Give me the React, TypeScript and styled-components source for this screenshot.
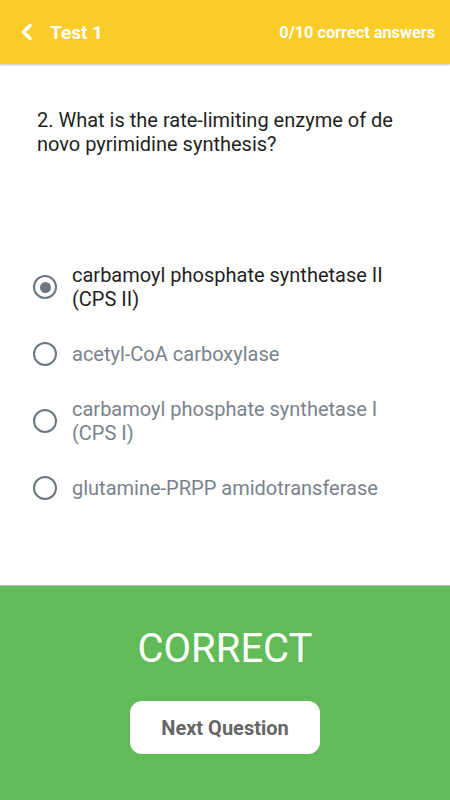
import * as React from 'react'
import styled, { createGlobalStyle } from 'styled-components'

const GlobalStyle = createGlobalStyle`
  html, body {
    margin: 0;
    padding: 0;
    height: 100%;
  }
  body {
    font-family: Roboto, 'Noto Sans', 'Liberation Sans', sans-serif;
    background: #ffffff;
  }
  #root {
    height: 100%;
  }
`

const Screen = styled.div`
  width: 450px;
  height: 800px;
  display: flex;
  flex-direction: column;
  overflow: hidden;
`

const Header = styled.header`
  height: 64px;
  flex: 0 0 64px;
  background: #f9cc27;
  display: flex;
  align-items: center;
  padding: 0 15px 0 18px;
  color: #ffffff;
  box-shadow: 0 1px 2px rgba(0, 0, 0, 0.25);
  position: relative;
  z-index: 1;
`

const BackButton = styled.button`
  border: 0;
  background: none;
  padding: 0;
  width: 16px;
  height: 24px;
  display: flex;
  align-items: center;
  justify-content: center;
  color: #ffffff;
  cursor: pointer;
`

const Title = styled.div`
  font-size: 19px;
  font-weight: 700;
  margin-left: 16px;
  flex: 1;
`

const Score = styled.div`
  font-size: 16.3px;
  font-weight: 700;
`

const Body = styled.main`
  flex: 1;
  display: flex;
  flex-direction: column;
  padding: 44px 30px 0 37px;
`

const Question = styled.h1`
  margin: 0;
  font-size: 20px;
  font-weight: 400;
  line-height: 24px;
  color: #1f1f1f;
`

const Options = styled.div`
  margin-top: 107px;
  margin-left: -4px;
  display: flex;
  flex-direction: column;
  gap: 31px;
`

const Option = styled.label`
  display: flex;
  align-items: center;
  gap: 15px;
  cursor: pointer;
`

const Radio = styled.span<{ checked: boolean }>`
  flex: 0 0 auto;
  box-sizing: border-box;
  width: 24px;
  height: 24px;
  border-radius: 50%;
  border: 2.5px solid #6e7580;
  display: flex;
  align-items: center;
  justify-content: center;

  &::after {
    content: '';
    width: 11px;
    height: 11px;
    border-radius: 50%;
    background: #6e7580;
    display: ${(p) => (p.checked ? 'block' : 'none')};
  }
`

const OptionLabel = styled.span<{ checked: boolean }>`
  font-size: 20px;
  line-height: 24px;
  color: ${(p) => (p.checked ? '#1f1f1f' : '#7a828c')};
`

const Footer = styled.footer`
  flex: 0 0 214px;
  background: #62bb59;
  border-top: 1px solid #bdbdbd;
  display: flex;
  flex-direction: column;
  align-items: center;
`

const Result = styled.div`
  margin-top: 39px;
  font-size: 40px;
  font-weight: 400;
  color: #ffffff;
  line-height: 48px;
`

const NextButton = styled.button`
  margin-top: 28px;
  width: 190px;
  height: 53px;
  border: 0;
  border-radius: 12px;
  background: #ffffff;
  font-family: Roboto, 'Noto Sans', 'Liberation Sans', sans-serif;
  font-size: 20px;
  font-weight: 700;
  color: #666666;
  cursor: pointer;
`

const answers = [
  'carbamoyl phosphate synthetase II (CPS II)',
  'acetyl-CoA carboxylase',
  'carbamoyl phosphate synthetase I (CPS I)',
  'glutamine-PRPP amidotransferase'
]

export default function App() {
  const [selected, setSelected] = React.useState(0)

  return (
    <>
      <GlobalStyle />
      <Screen>
        <Header>
          <BackButton aria-label='Back'>
            <svg width='13' height='18' viewBox='0 0 13 18'>
              <path
                d='M10 2.5 L3.5 9 L10 15.5'
                fill='none'
                stroke='#ffffff'
                strokeWidth='3.6'
                strokeLinecap='round'
                strokeLinejoin='round'
              />
            </svg>
          </BackButton>
          <Title>Test 1</Title>
          <Score>0/10 correct answers</Score>
        </Header>
        <Body>
          <Question>
            2. What is the rate-limiting enzyme of de novo pyrimidine synthesis?
          </Question>
          <Options>
            {answers.map((a, i) => (
              <Option key={a} onClick={() => setSelected(i)}>
                <Radio checked={selected === i} />
                <OptionLabel checked={selected === i}>{a}</OptionLabel>
              </Option>
            ))}
          </Options>
        </Body>
        <Footer>
          <Result>CORRECT</Result>
          <NextButton>Next Question</NextButton>
        </Footer>
      </Screen>
    </>
  )
}
